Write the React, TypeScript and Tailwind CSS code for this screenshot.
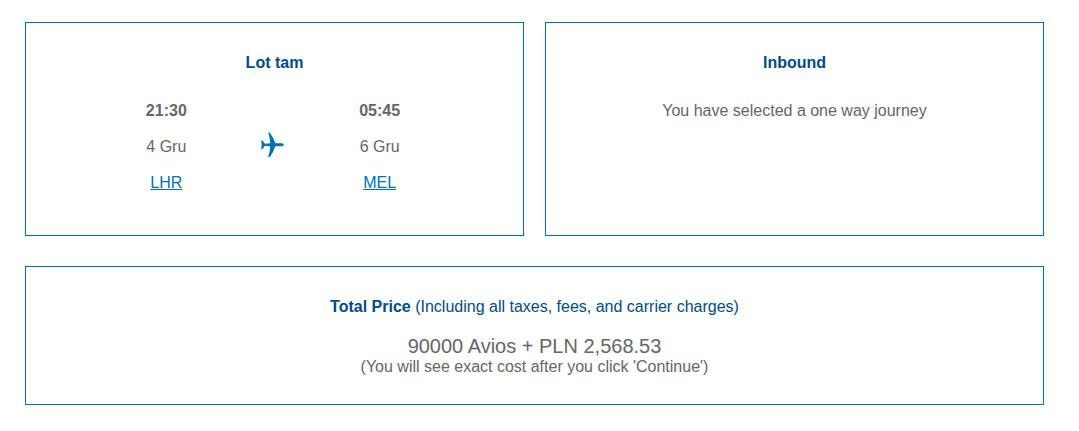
import React from "react";

interface Stop {
  time: string;
  date: string;
  airport: string;
}

const departure: Stop = { time: "21:30", date: "4 Gru", airport: "LHR" };
const arrival: Stop = { time: "05:45", date: "6 Gru", airport: "MEL" };

const PlaneIcon = () => (
  <svg
    viewBox="0 0 24 26"
    className="h-[26px] w-6 fill-[#0072b0]"
    aria-hidden="true"
  >
    <path d="M24 12.8C24 13.7 22.4 14.3 20.4 14.3H15.4Q13.4 20.2 10.2 24.4Q9.7 25.1 9.2 25.1H8.2Q9.9 20 10.2 14.4L5 13.8Q3.8 15.6 2.1 17H1L1.8 12.8L1 8.6H2.1Q3.8 10 5 11.8L10.2 11.2Q9.9 5.6 8.2 .5H9.2Q9.7 .5 10.2 1.2Q13.4 5.4 15.4 11.3H20.4C22.4 11.3 24 11.9 24 12.8Z" />
  </svg>
);

const FlightStop = ({ stop }: { stop: Stop }) => (
  <div className="flex flex-col items-center gap-3">
    <p className="font-bold">{stop.time}</p>
    <p>{stop.date}</p>
    <a href="#" className="text-[#0072b0] underline">
      {stop.airport}
    </a>
  </div>
);

interface JourneyCardProps {
  title: string;
  children: React.ReactNode;
}

const JourneyCard = ({ title, children }: JourneyCardProps) => (
  <section className="flex flex-1 flex-col gap-6 border border-[#0072b0] pt-7 pb-10 text-center">
    <h2 className="font-bold text-[#004b85]">{title}</h2>
    {children}
  </section>
);

const App = () => {
  return (
    <main className="flex flex-col gap-[30px] bg-white pt-[22px] pr-[35px] pb-[26px] pl-[25px] font-['Liberation_Sans',Arial,sans-serif] text-base text-[#666666]">
      <div className="flex gap-[21px]">
        <JourneyCard title="Lot tam">
          <div className="flex justify-center pr-[3px]">
            <div className="grid w-80 grid-cols-3">
              <FlightStop stop={departure} />
              <div className="flex items-center justify-center pr-0.5 pb-1">
                <PlaneIcon />
              </div>
              <FlightStop stop={arrival} />
            </div>
          </div>
        </JourneyCard>
        <JourneyCard title="Inbound">
          <p>You have selected a one way journey</p>
        </JourneyCard>
      </div>
      <section className="border border-[#0072b0] pt-7 pb-[26px] text-center">
        <h2 className="text-[#004b85]">
          <strong className="font-bold">Total Price</strong> (Including all
          taxes, fees, and carrier charges)
        </h2>
        <p className="mt-[17px] text-xl leading-5">
          90000 Avios + PLN 2,568.53
        </p>
        <p className="leading-[22px]">
          (You will see exact cost after you click 'Continue')
        </p>
      </section>
    </main>
  );
};

export default App;
